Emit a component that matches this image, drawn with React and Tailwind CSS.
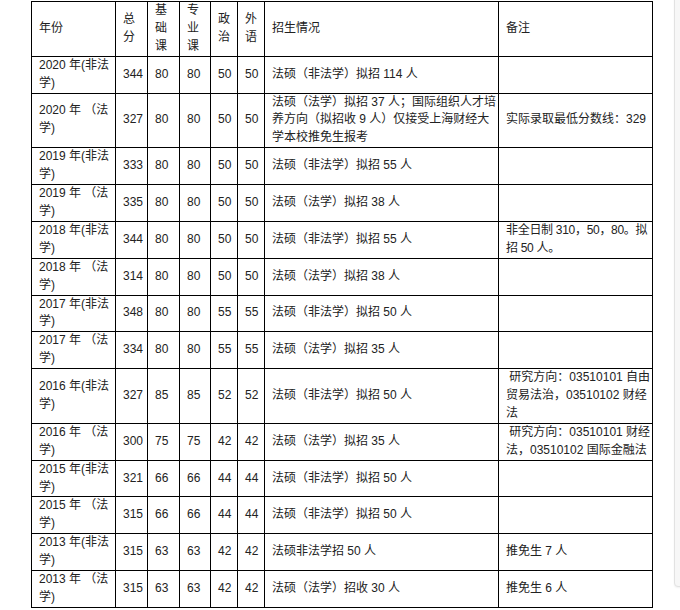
import React from "react";

const rows = [
  ["2020 年(非法学)", "344", "80", "80", "50", "50", "法硕（非法学）拟招 114 人", ""],
  ["2020 年 （法学)", "327", "80", "80", "50", "50", "法硕（法学）拟招 37 人；国际组织人才培养方向（拟招收 9 人）仅接受上海财经大学本校推免生报考", "实际录取最低分数线：329"],
  ["2019 年(非法学)", "333", "80", "80", "50", "50", "法硕（非法学）拟招 55 人", ""],
  ["2019 年 （法学)", "335", "80", "80", "50", "50", "法硕（法学）拟招 38 人", ""],
  ["2018 年(非法学)", "344", "80", "80", "50", "50", "法硕（非法学）拟招 55 人", "非全日制 310，50，80。拟招 50 人。"],
  ["2018 年 （法学)", "314", "80", "80", "50", "50", "法硕（法学）拟招 38 人", ""],
  ["2017 年(非法学)", "348", "80", "80", "55", "55", "法硕（非法学）拟招 50 人", ""],
  ["2017 年 （法学)", "334", "80", "80", "55", "55", "法硕（法学）拟招 35 人", ""],
  ["2016 年(非法学)", "327", "85", "85", "52", "52", "法硕（非法学）拟招 50 人", "\u00a0研究方向：03510101 自由贸易法治，03510102 财经法"],
  ["2016 年 （法学)", "300", "75", "75", "42", "42", "法硕（法学）拟招 35 人", "\u00a0研究方向：03510101 财经法，03510102 国际金融法"],
  ["2015 年(非法学)", "321", "66", "66", "44", "44", "法硕（非法学）拟招 50 人", ""],
  ["2015 年 （法学)", "315", "66", "66", "44", "44", "法硕（非法学）拟招 50 人", ""],
  ["2013 年(非法学)", "315", "63", "63", "42", "42", "法硕非法学招 50 人", "推免生 7 人"],
  ["2013 年 （法学)", "315", "63", "63", "42", "42", "法硕（法学）招收 30 人", "推免生 6 人"],
];

const widths = ["w-[84px]", "w-[32px]", "w-[32px]", "w-[31px]", "w-[27px]", "w-[27px]", "w-[234px]", "w-[154px]"];
const headers = ["年份", "总分", "基础课", "专业课", "政治", "外语", "招生情况", "备注"];

const cell = "border border-black pl-[7px] pr-0 py-0 align-middle text-left text-justify font-normal";

export default function App() {
  return (
    <div
      className="relative w-[680px] h-[610px] overflow-hidden bg-white text-[#222] text-[12px] leading-[17.9px]"
      style={{ fontFamily: '"Liberation Sans", "Noto Sans CJK SC", sans-serif' }}
    >
      <div className="flex items-start">
        <table className="ml-[31px] mt-px table-fixed border-collapse w-[621px]">
          <thead>
            <tr>
              {headers.map((h, i) => (
                <th key={i} className={`${cell} ${widths[i]}`}>
                  {i > 0 && i < 6
                    ? h.split("").map((ch, k) => <div key={k}>{ch}</div>)
                    : h}
                </th>
              ))}
            </tr>
          </thead>
          <tbody>
            {rows.map((r, ri) => (
              <tr key={ri}>
                {r.map((c, ci) => (
                  <td
                    key={ci}
                    className={ri === 4 && ci === 7 ? `${cell} tracking-[-0.3px]` : cell}
                  >
                    {c}
                  </td>
                ))}
              </tr>
            ))}
          </tbody>
        </table>
        {/* side panel peeking in from the right */}
        <div className="ml-[21px] -mt-[10px] w-[40px] h-[597px] shrink-0 rounded-[4px] border border-[#e2e2e2] bg-[#f7f7f7] shadow-[0_1px_2px_rgba(0,0,0,0.06)]" />
      </div>
    </div>
  );
}
